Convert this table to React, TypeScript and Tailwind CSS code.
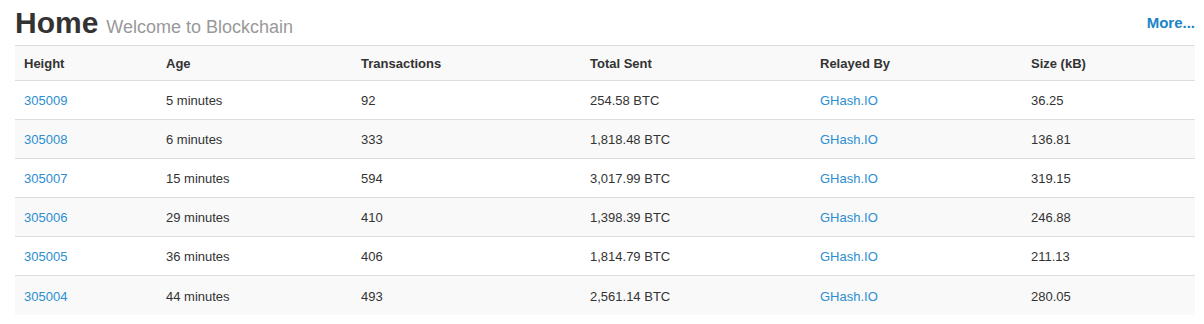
import React from "react";

type Block = {
  height: string;
  age: string;
  txs: string;
  sent: string;
  relayedBy: string;
  size: string;
};

const blocks: Block[] = [
  { height: "305009", age: "5 minutes", txs: "92", sent: "254.58 BTC", relayedBy: "GHash.IO", size: "36.25" },
  { height: "305008", age: "6 minutes", txs: "333", sent: "1,818.48 BTC", relayedBy: "GHash.IO", size: "136.81" },
  { height: "305007", age: "15 minutes", txs: "594", sent: "3,017.99 BTC", relayedBy: "GHash.IO", size: "319.15" },
  { height: "305006", age: "29 minutes", txs: "410", sent: "1,398.39 BTC", relayedBy: "GHash.IO", size: "246.88" },
  { height: "305005", age: "36 minutes", txs: "406", sent: "1,814.79 BTC", relayedBy: "GHash.IO", size: "211.13" },
  { height: "305004", age: "44 minutes", txs: "493", sent: "2,561.14 BTC", relayedBy: "GHash.IO", size: "280.05" },
];

const headers = ["Height", "Age", "Transactions", "Total Sent", "Relayed By", "Size (kB)"];
const colWidths = ["w-[142px]", "w-[195px]", "w-[229px]", "w-[230px]", "w-[211px]", "w-[173px]"];

export default function App() {
  return (
    <div className="bg-white pl-[15px] w-[1195px] text-[#333] font-['Liberation_Sans',Arial,sans-serif]">
      {/* Title row */}
      <div className="flex items-start justify-between h-[45px]">
        <h1 className="pt-[5px] leading-[36px] flex items-baseline gap-[8px]">
          <span className="text-[30px] font-bold text-[#333]">Home</span>
          <span className="text-[18px] text-[#999]">Welcome to Blockchain</span>
        </h1>
        <a href="#" className="mt-[13px] text-[15px] leading-[20px] font-bold text-[#1a84c7]">
          More...
        </a>
      </div>

      {/* Latest blocks */}
      <table className="w-[1180px] table-fixed border-collapse text-[13px]">
        <colgroup>
          {colWidths.map((w, i) => (
            <col key={i} className={w} />
          ))}
        </colgroup>
        <thead>
          <tr className="bg-[#f9f9f9] h-[35px]">
            {headers.map((h) => (
              <th key={h} className="border-t border-b border-[#ddd] pl-[9px] pt-[2px] text-left font-bold align-middle">
                {h}
              </th>
            ))}
          </tr>
        </thead>
        <tbody>
          {blocks.map((b, i) => (
            <tr key={b.height} className={`h-[39px] ${i % 2 === 1 ? "bg-[#f9f9f9]" : "bg-white"}`}>
              <td className="border-t border-[#ddd] pl-[9px] pt-[2px] align-middle">
                <a href="#" className="text-[#2b8ed3]">{b.height}</a>
              </td>
              <td className="border-t border-[#ddd] pl-[9px] pt-[2px] align-middle">{b.age}</td>
              <td className="border-t border-[#ddd] pl-[9px] pt-[2px] align-middle">{b.txs}</td>
              <td className="border-t border-[#ddd] pl-[9px] pt-[2px] align-middle">{b.sent}</td>
              <td className="border-t border-[#ddd] pl-[9px] pt-[2px] align-middle">
                <a href="#" className="text-[#2b8ed3]">{b.relayedBy}</a>
              </td>
              <td className="border-t border-[#ddd] pl-[9px] pt-[2px] align-middle">{b.size}</td>
            </tr>
          ))}
        </tbody>
      </table>
    </div>
  );
}
